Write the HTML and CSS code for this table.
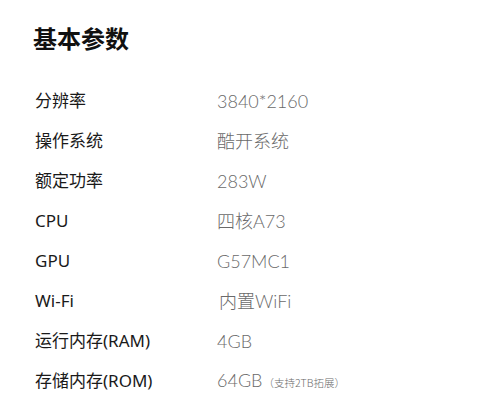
FILE: index.html
```html
<!DOCTYPE html>
<html lang="zh">
<head>
<meta charset="utf-8">
<link rel="stylesheet" href="styles.css">
</head>
<body>
<div class="page">
  <h1 class="title">基本参数</h1>
  <dl class="specs">
    <div class="row"><dt>分辨率</dt><dd>3840*2160</dd></div>
    <div class="row"><dt>操作系统</dt><dd>酷开系统</dd></div>
    <div class="row"><dt>额定功率</dt><dd>283W</dd></div>
    <div class="row"><dt>CPU</dt><dd>四核A73</dd></div>
    <div class="row"><dt>GPU</dt><dd>G57MC1</dd></div>
    <div class="row"><dt>Wi-Fi</dt><dd class="wifi">内置WiFi</dd></div>
    <div class="row"><dt>运行内存(RAM)</dt><dd>4GB</dd></div>
    <div class="row"><dt>存储内存(ROM)</dt><dd>64GB<span class="note">（支持2TB拓展）</span></dd></div>
  </dl>
</div>
</body>
</html>
```
FILE: styles.css
```css
html, body {
  margin: 0;
  padding: 0;
  background: #fff;
}
.page {
  width: 500px;
  height: 412px;
  padding: 23px 0 0 33px;
  box-sizing: border-box;
  overflow: hidden;
}
.title {
  margin: 0;
  font-family: "Noto Sans CJK SC", "Noto Sans", sans-serif;
  font-size: 24px;
  font-weight: 700;
  line-height: 30px;
  color: #111;
}
.specs {
  margin: 28px 0 0 0;
  padding: 0;
}
.row {
  display: grid;
  grid-template-columns: 184px 1fr;
  height: 40px;
  align-items: center;
}
.row dt {
  margin: 0 0 0 2px;
  font-family: "Noto Sans", "Noto Sans CJK SC", sans-serif;
  font-size: 17px;
  color: #1a1a1a;
  line-height: 24px;
}
.row dd {
  margin: 0;
  font-family: Lato, "Noto Sans CJK SC", sans-serif;
  font-weight: 300;
  font-size: 18px;
  color: #6a6a6a;
  line-height: 24px;
}
.row dd.wifi {
  padding-left: 2px;
}
.note {
  font-family: "Noto Sans CJK SC", sans-serif;
  font-size: 10.5px;
  margin-left: 1px;
}
```
